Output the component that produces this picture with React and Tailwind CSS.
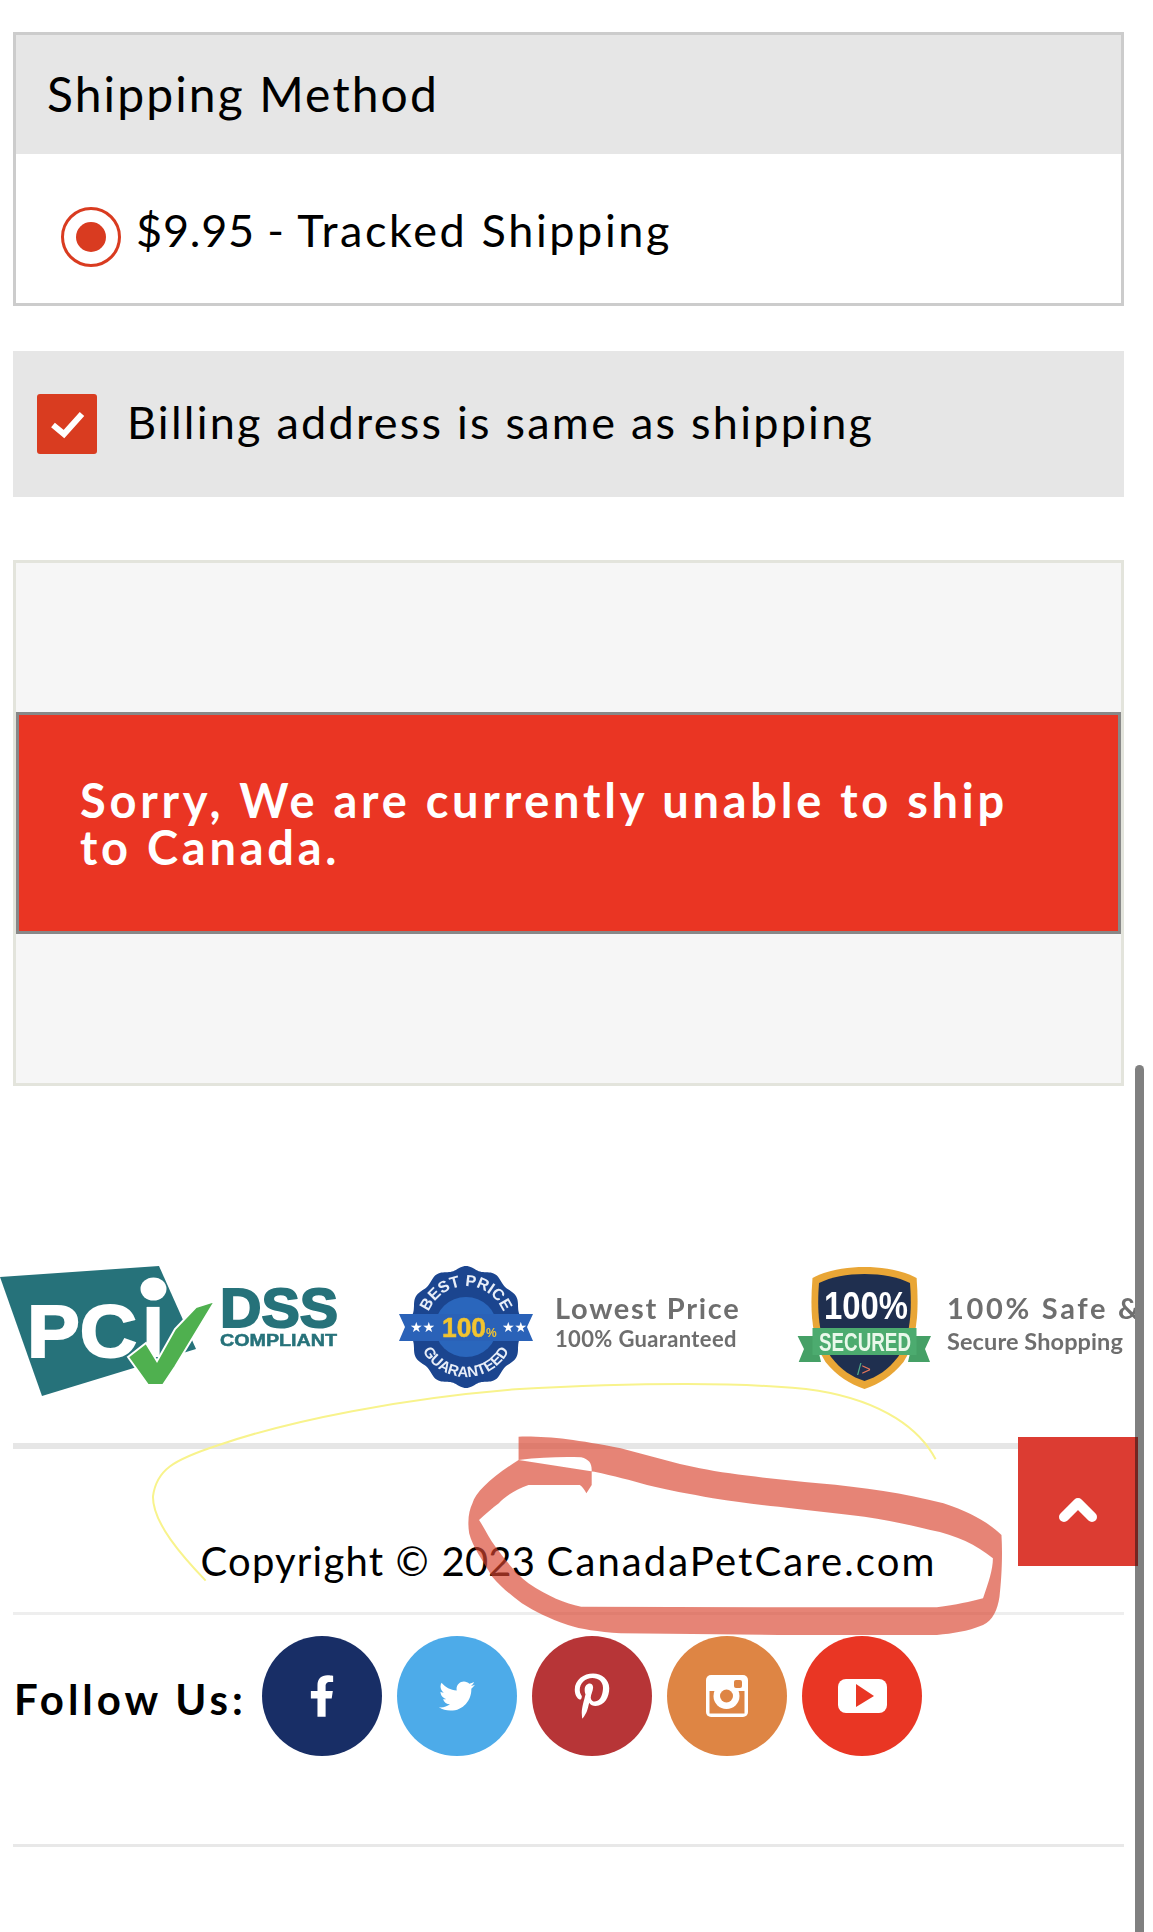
import React from "react";
import { FaFacebookF, FaTwitter, FaPinterestP } from "react-icons/fa";

function rosette(cx, cy, rx, ry, n) {
  const pts = [];
  for (let i = 0; i <= 240; i++) {
    const t = (i / 240) * Math.PI * 2;
    const k = 1 - 0.03 * (1 - Math.cos(n * t));
    pts.push(`${(cx + rx * k * Math.sin(t)).toFixed(1)},${(cy - ry * k * Math.cos(t)).toFixed(1)}`);
  }
  return "M" + pts.join("L") + "Z";
}

function PciLogo() {
  return (
    <svg viewBox="0 1267 340 130" className="w-[340px] h-[130px] shrink-0 blur-[0.5px]">
      <polygon points="0,1278 159,1267 196,1350 42,1397" fill="#26727a" />
      <text x="27" y="1358" fontFamily="Liberation Sans" fontWeight="700" fontSize="74" fill="#fff" stroke="#fff" strokeWidth="2" textLength="110" lengthAdjust="spacingAndGlyphs">PC</text>
      <text x="140" y="1358" fontFamily="Liberation Sans" fontWeight="700" fontSize="94" fill="#fff">ı</text>
      <ellipse cx="153.5" cy="1290" rx="13" ry="11.5" fill="#fff" />
      <polygon points="128,1358 146,1344 157,1362 175,1330 196,1308 215,1302 195,1335 175,1368 163,1386 148,1386" fill="#4fb04f" stroke="#fff" strokeWidth="2" />
      <text x="220" y="1328" fontFamily="Liberation Sans" fontWeight="700" fontSize="56" fill="#26727a" stroke="#26727a" strokeWidth="2" textLength="118" lengthAdjust="spacingAndGlyphs">DSS</text>
      <text x="220" y="1347" fontFamily="Liberation Sans" fontWeight="700" fontSize="16" fill="#26727a" stroke="#26727a" strokeWidth="0.5" textLength="117" lengthAdjust="spacingAndGlyphs">COMPLIANT</text>
    </svg>
  );
}

function PriceBadge() {
  return (
    <svg viewBox="399 1267 134 122" className="w-[134px] h-[122px] shrink-0 blur-[0.4px]">
      <defs>
        <path id="arcTop" d="M425,1331 A41,44 0 0 1 507,1331" />
        <path id="arcBottom" d="M417,1328 A49,50 0 0 0 515,1328" />
      </defs>
      <path d={rosette(466, 1328, 58, 61, 12)} fill="#1b458f" />
      <ellipse cx="466" cy="1328" rx="31" ry="30" fill="#2a66bc" />
      <polygon points="399,1315 533,1315 527,1328 533,1342 399,1342 405,1328" fill="#2a62b8" />
      <text fill="#e8eef8" fontFamily="Liberation Sans" fontWeight="700" fontSize="16">
        <textPath href="#arcTop" startOffset="50%" textAnchor="middle">BEST PRICE</textPath>
      </text>
      <text fill="#e8eef8" fontFamily="Liberation Sans" fontWeight="700" fontSize="15">
        <textPath href="#arcBottom" startOffset="50%" textAnchor="middle">GUARANTEED</textPath>
      </text>
      <text x="442" y="1338" fontFamily="Liberation Sans" fontWeight="700" fontSize="28" fill="#f2c430" stroke="#f2c430" strokeWidth="0.6" textLength="44" lengthAdjust="spacingAndGlyphs">100</text>
      <text x="486" y="1338" fontFamily="Liberation Sans" fontWeight="700" fontSize="12" fill="#f2c430">%</text>
      <text x="410" y="1333" fontSize="14" fill="#fff" fontFamily="DejaVu Sans">★★</text>
      <text x="502" y="1333" fontSize="14" fill="#fff" fontFamily="DejaVu Sans">★★</text>
    </svg>
  );
}

function ShieldBadge() {
  return (
    <svg viewBox="798 1267 134 125" className="w-[134px] h-[125px] shrink-0 blur-[0.4px]">
      <path d="M865.5,1268 C885,1268 905,1272 917.6,1279 C920,1310 919,1340 904.5,1363 C893,1377 880,1385 865.5,1390 C851,1385 838,1377 826.5,1363 C812,1340 811,1310 813.5,1279 C826,1272 846,1268 865.5,1268Z" fill="#e9a636" />
      <path d="M865.5,1275 C883,1275 899,1278 911,1284 C913,1310 912,1338 899,1358 C889,1371 878,1378 865.5,1382 C853,1378 842,1371 832,1358 C819,1338 818,1310 820,1284 C832,1278 848,1275 865.5,1275Z" fill="#1f2f4f" />
      <polygon points="798.6,1337 816,1337 822,1363 799.7,1363 805,1350" fill="#45a066" />
      <polygon points="932,1337 915,1337 909,1363 931,1363 926,1350" fill="#45a066" />
      <rect x="813.5" y="1329" width="104" height="27" fill="#4cab6f" />
      <text x="825" y="1320" fontFamily="Liberation Sans" fontWeight="700" fontSize="39" fill="#fff" textLength="84" lengthAdjust="spacingAndGlyphs">100%</text>
      <text x="820" y="1352" fontFamily="Liberation Sans" fontWeight="700" fontSize="25" fill="#e9f8ea" textLength="92" lengthAdjust="spacingAndGlyphs">SECURED</text>
      <text x="858" y="1376" fontFamily="Liberation Sans" fontSize="16"><tspan fill="#4fa98a">/</tspan><tspan fill="#e8775a">&gt;</tspan></text>
    </svg>
  );
}

function InstaIcon() {
  return (
    <svg viewBox="0 0 42 42" className="w-[42px] h-[42px] blur-[0.4px]">
      <rect width="42" height="42" rx="5" fill="#fff" />
      <rect x="3.5" y="16" width="35" height="22.5" fill="#de8544" />
      <circle cx="20.5" cy="21" r="13" fill="#fff" />
      <circle cx="20.5" cy="21" r="6.5" fill="#de8544" />
      <rect x="28" y="5" width="8" height="8" rx="2" fill="#de8544" />
    </svg>
  );
}

function YoutubeIcon() {
  return (
    <svg viewBox="0 0 49 34" className="w-[49px] h-[34px] blur-[0.4px]">
      <rect width="49" height="34" rx="8" fill="#fff" />
      <polygon points="18,5 36,17 18,28" fill="#e93624" />
    </svg>
  );
}

function Circle({ color, children }) {
  return (
    <div className={`w-[120px] h-[120px] rounded-full flex items-center justify-center shrink-0 ${color}`}>
      {children}
    </div>
  );
}

function Annotations() {
  return (
    <svg viewBox="0 0 1153 1932" className="absolute left-0 top-0 w-[1153px] h-[1932px] pointer-events-none">
      <g transform="translate(120 1370) scale(0.6588 0.3333)">
        <path
          d="M1238,268 C1215,180 1160,95 1060,62 C960,35 780,38 600,58 C430,85 260,150 150,225 C80,270 55,300 50,380 C50,460 95,560 130,632"
          fill="none"
          stroke="#f8f38c"
          strokeWidth="2"
          vectorEffect="non-scaling-stroke"
        />
        <path
          d="M605,200 C650,198 690,208 760,235 C800,255 840,280 880,295 C930,315 1000,328 1060,340 C1130,352 1190,370 1250,400 C1290,425 1320,460 1338,495 C1340,560 1338,630 1335,680 C1332,720 1325,750 1310,765 C1285,785 1265,790 1240,795 L1000,795 L760,790 C725,785 700,778 680,765 C650,745 630,725 610,700 C590,670 578,650 565,620 C550,570 535,530 530,490 C527,450 530,420 535,400 C540,365 565,320 605,270 Z M605,270 C640,262 670,260 700,262 C712,268 716,280 716,300 L716,345 L708,370 C705,360 702,350 698,345 L620,345 C600,360 585,378 575,400 C565,415 555,432 545,450 C555,480 560,505 570,530 C585,570 600,610 620,640 C650,680 675,700 700,710 L1000,712 L1240,712 C1270,705 1290,695 1310,685 C1318,640 1325,600 1325,565 C1300,525 1270,495 1230,480 C1200,465 1165,450 1130,440 C1090,430 1040,420 1000,410 C970,405 935,395 900,385 C865,372 830,360 800,345 C775,330 750,318 720,305 L605,270 Z"
          fill="#d9442f"
          fillOpacity="0.66"
          fillRule="evenodd"
        />
      </g>
    </svg>
  );
}

export default function App() {
  return (
    <div className="relative w-[1153px] h-[1932px] overflow-hidden bg-white text-black font-['Lato','Noto_Sans',sans-serif]">
      <div className="w-[1137px] pl-[13px] pr-[13px] pt-[32px]">
        <section className="h-[274px] border-[3px] border-[#cccccc]">
          <div className="h-[119px] bg-[#e6e6e6] flex items-center pl-[31px]">
            <h2 className="text-[48px] leading-none tracking-[2.1px] -mt-[1px]">Shipping Method</h2>
          </div>
          <div className="h-[149px] flex items-center pl-[45px] pt-[17px]">
            <span className="w-[60px] h-[60px] rounded-full border-[3px] border-[#d93b20] flex items-center justify-center shrink-0">
              <span className="w-[30px] h-[30px] rounded-full bg-[#d93b20]" />
            </span>
            <span className="ml-[15px] mb-[14px] text-[45px] leading-none tracking-[0.8px]">
              $9.95 - <span className="tracking-[2.6px]">Tracked Shipping</span>
            </span>
          </div>
        </section>

        <div className="mt-[45px] h-[146px] bg-[#e6e6e6] flex items-center pl-[24px]">
          <span className="w-[60px] h-[60px] rounded-[3px] bg-[#d93c20] flex items-center justify-center shrink-0">
            <svg viewBox="0 0 60 60" className="w-[60px] h-[60px] blur-[0.4px]">
              <path d="M16,31 L27,40 L45,20" fill="none" stroke="#fff" strokeWidth="6" strokeLinejoin="miter" />
            </svg>
          </span>
          <span className="ml-[30px] mb-[3px] text-[45px] leading-none tracking-[2.25px]">Billing address is same as shipping</span>
        </div>

        <section className="mt-[63px] h-[526px] border-[3px] border-[#e3e4dc] bg-[#f6f6f6] flex items-center">
          <div className="w-full h-[222px] border-[3px] border-[#888888] bg-[#ea3523] flex items-center pl-[61px] pr-[88px]">
            <p className="text-white text-[47px] leading-[47px] font-bold tracking-[3.75px] mt-[2px]">
              Sorry, We are currently unable to ship to Canada.
            </p>
          </div>
        </section>
      </div>

      <div className="mt-[180px] flex items-start w-[1135px] overflow-hidden">
        <PciLogo />
        <div className="ml-[59px]"><PriceBadge /></div>
        <div className="ml-[22px] w-[187px] shrink-0 pt-[24px] text-[#6e6e6e] font-bold blur-[0.4px]">
          <div className="text-[29px] leading-[36px] tracking-[1.7px] whitespace-nowrap">Lowest Price</div>
          <div className="text-[22px] leading-[26px] tracking-[0.35px] whitespace-nowrap">100% Guaranteed</div>
        </div>
        <div className="ml-[55px]"><ShieldBadge /></div>
        <div className="ml-[16px] shrink-0 pt-[24px] text-[#6e6e6e] font-bold blur-[0.4px]">
          <div className="text-[29px] leading-[36px] tracking-[2.7px] whitespace-nowrap">100% Safe &amp;</div>
          <div className="text-[23.5px] leading-[30px] tracking-[0.1px] whitespace-nowrap">Secure Shopping</div>
        </div>
      </div>

      <div className="mx-[13px] w-[1111px]">
        <div className="mt-[47px] h-[6px] bg-[#e6e6e6]" />
        <div className="h-[163px] flex items-end justify-center pb-[31px]">
          <p className="text-[40px] leading-none tracking-[1.2px] whitespace-nowrap">
            Copyright © <span className="tracking-[0.2px]">2023</span> <span className="tracking-[2.1px]">CanadaPetCare.com</span>
          </p>
        </div>
        <div className="h-[3px] bg-[#eeeeee]" />
        <div className="mt-[21px] flex items-center gap-[15px]">
          <span className="ml-[1px] mr-[0.5px] mt-[6px] text-[42px] leading-none font-bold tracking-[3.95px] whitespace-nowrap">Follow Us:</span>
          <Circle color="bg-[#182e66]"><FaFacebookF className="text-white w-[26px] h-[48px] blur-[0.4px]" /></Circle>
          <Circle color="bg-[#4dabe9]"><FaTwitter className="text-white w-[42px] h-[36px] blur-[0.4px]" /></Circle>
          <Circle color="bg-[#b73537]"><FaPinterestP className="text-white w-[38px] h-[46px] blur-[0.4px]" /></Circle>
          <Circle color="bg-[#de8544]"><InstaIcon /></Circle>
          <Circle color="bg-[#e93624]"><YoutubeIcon /></Circle>
        </div>
        <div className="mt-[88px] h-[3px] bg-[#e8e8e8]" />
      </div>

      <Annotations />

      <div className="absolute left-[1135px] top-[1065px] bottom-0 w-[9px] rounded-t-[5px] bg-[#808080]" />
      <div className="absolute left-[1018px] top-[1437px] w-[120px] h-[129px] bg-[#dc3c32] flex items-center justify-center">
        <svg viewBox="0 0 120 129" className="absolute inset-0 w-[120px] h-[129px]">
          <path d="M46,80 L60,66 L74,80" fill="none" stroke="#fff" strokeWidth="10" strokeLinecap="round" strokeLinejoin="round" />
        </svg>
        <span className="absolute right-0 top-0 bottom-0 w-[3px] bg-[#742521]" />
      </div>
    </div>
  );
}
